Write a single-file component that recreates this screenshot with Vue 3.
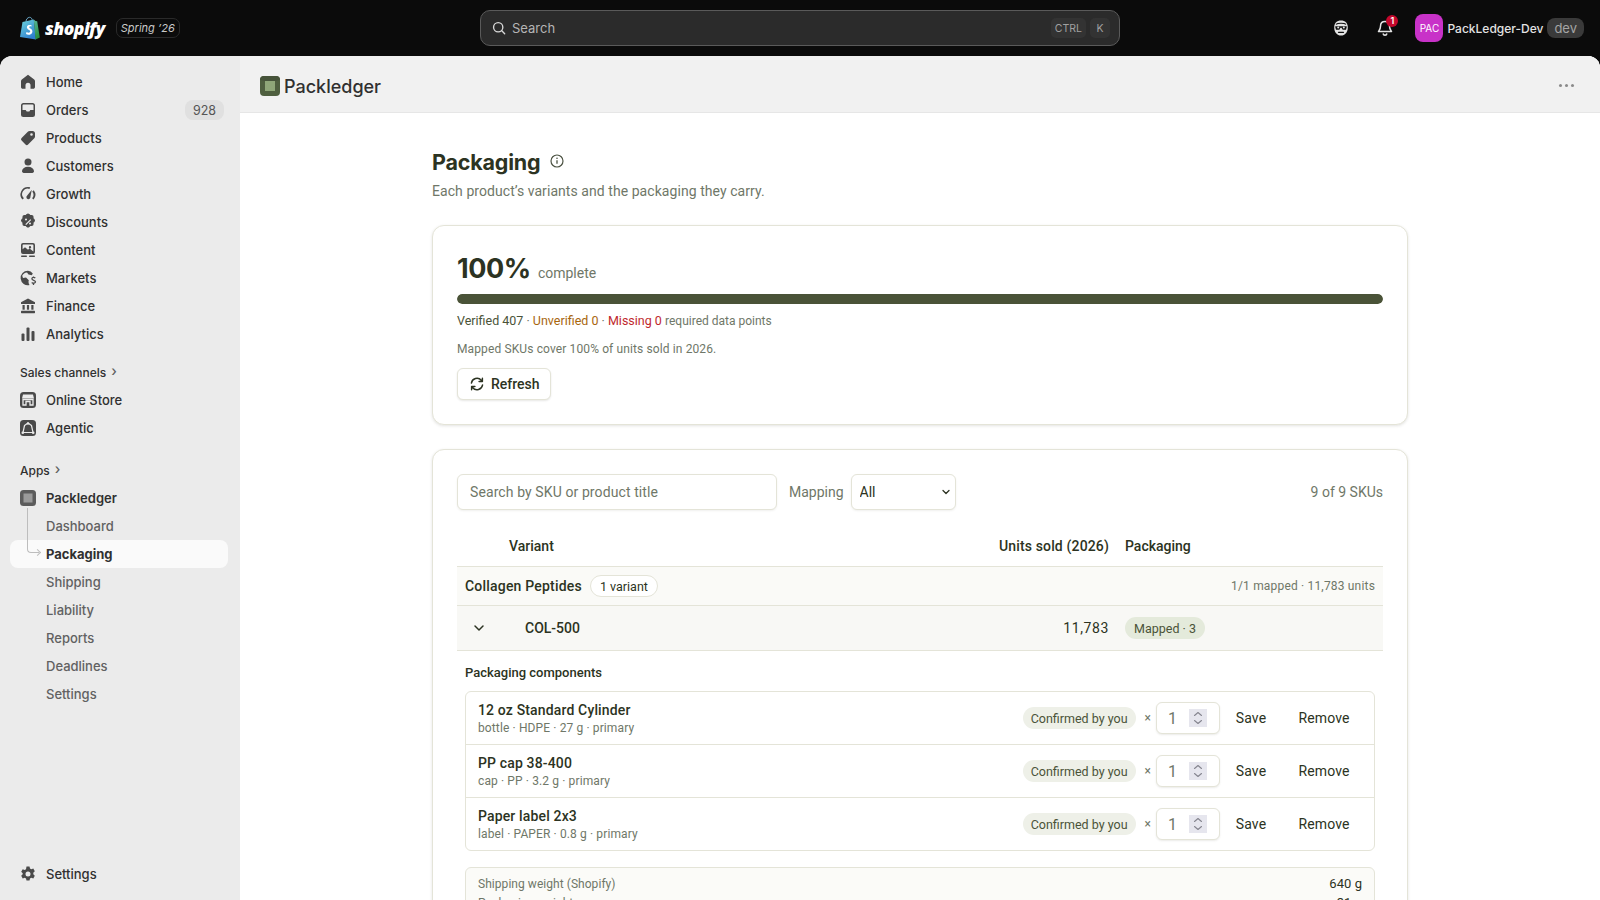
<template>
  <div class="app">
    <header class="topbar">
      <div class="brand">
        <svg class="bag" width="22" height="25" viewBox="0 0 22 24">
          <defs>
            <linearGradient id="bagLeft" x1="0" y1="0" x2="0.6" y2="1">
              <stop offset="0" stop-color="#6fd8dc" />
              <stop offset="1" stop-color="#2f7fd0" />
            </linearGradient>
            <linearGradient id="bagRight" x1="0" y1="0" x2="0.3" y2="1">
              <stop offset="0" stop-color="#58b8a0" />
              <stop offset="1" stop-color="#2a8f3f" />
            </linearGradient>
          </defs>
          <path d="M7 5c0-2 1.500-4 3.500-4.200 1.800 0 2.600 1.500 2.800 3.200" fill="none" stroke="#6aa7c8" stroke-width="1" />
          <path d="M3.500 5.500 14.800 3 17 23 1 20.500z" fill="url(#bagLeft)" />
          <path d="M14.800 3 16.500 4.500 18.200 4.800 20.800 21 16.500 23z" fill="url(#bagRight)" />
          <path d="M12.500 8.800c-1-.5-4.400-1-4.600 1.700-.2 2.700 3.500 2.800 3.300 4.600-.1 1.400-2.200 1.300-3.700.4l-.5 2.100c1.800 1.100 6 1.100 6.400-2.400.3-2.900-3.300-3.200-3.200-4.700.1-.9 1.400-.9 2.400-.4z" fill="#fff" />
        </svg>
        <span class="wordmark">shopify</span>
        <span class="edition">Spring ’26</span>
      </div>
      <div class="topsearch">
        <svg width="16" height="16" viewBox="0 0 20 20"><circle cx="9" cy="9" r="5.800" fill="none" stroke="#d8d8d8" stroke-width="1.700" /><path d="m13.500 13.500 3.600 3.600" stroke="#d8d8d8" stroke-width="1.700" stroke-linecap="round" /></svg>
        <span class="topsearch-label">Search</span>
        <span class="key">CTRL</span>
        <span class="key">K</span>
      </div>
      <div class="topright">
        <svg class="top-icon" width="20" height="20" viewBox="0 0 20 20">
          <path d="M10 2.500c4.200 0 6.800 2.500 6.800 6.900 0 4.800-2.900 8.100-6.800 8.100s-6.800-3.300-6.800-8.100C3.200 5 5.800 2.500 10 2.500z" fill="#e3e3e3" />
          <path d="M5 6.300c1.500-1.500 8.500-1.500 10 0" fill="none" stroke="#111" stroke-width="1.100" />
          <path d="M4.300 8.200h11.400v1l-.7 2.500h-3.300l-1.200-1.900h-1l-1.200 1.900H5l-.7-2.500z" fill="#111" />
          <circle cx="7.200" cy="9.600" r="1" fill="#e3e3e3" />
          <circle cx="12.800" cy="9.600" r="1" fill="#e3e3e3" />
          <path d="M7.500 14.300h5" stroke="#111" stroke-width="1.200" stroke-linecap="round" />
        </svg>
        <span class="bell">
          <svg width="20" height="20" viewBox="0 0 20 20"><path d="M10 3.500c-2.800 0-4.500 2-4.500 4.700 0 3-1.300 4.200-2 5.300h13c-.7-1.100-2-2.300-2-5.300 0-2.700-1.700-4.700-4.500-4.700zM8 15.500c.3 1.200 1 1.700 2 1.700s1.700-.5 2-1.700" fill="none" stroke="#e3e3e3" stroke-width="1.500" stroke-linejoin="round" /></svg>
          <span class="bell-count">1</span>
        </span>
        <span class="avatar">PAC</span>
        <span class="store-name">PackLedger-Dev</span>
        <span class="dev-pill">dev</span>
      </div>
    </header>

    <div class="shell">
      <aside class="sidebar">
        <nav class="nav-group">
          <a v-for="item in mainNav" :key="item.label" class="nav-item">
            <svg class="nav-icon" width="20" height="20" viewBox="0 0 20 20" v-html="item.icon"></svg>
            <span class="nav-label">{{ item.label }}</span>
            <span v-if="item.count" class="nav-count">{{ item.count }}</span>
          </a>
        </nav>

        <div class="nav-heading first">Sales channels <span class="chev">›</span></div>
        <nav class="nav-group">
          <a v-for="item in channels" :key="item.label" class="nav-item">
            <svg class="nav-icon" width="20" height="20" viewBox="0 0 20 20" v-html="item.icon"></svg>
            <span class="nav-label">{{ item.label }}</span>
          </a>
        </nav>

        <div class="nav-heading">Apps <span class="chev">›</span></div>
        <nav class="nav-group app-nav">
          <a class="nav-item strong">
            <svg class="nav-icon" width="20" height="20" viewBox="0 0 20 20">
              <rect x="2" y="2" width="16" height="16" rx="3.500" fill="#5c5c5c" />
              <rect x="5.500" y="5.500" width="9" height="9" fill="#9a9a9a" />
            </svg>
            <span class="nav-label">Packledger</span>
          </a>
          <span class="tree-line"></span>
          <a v-for="sub in appNav" :key="sub" class="nav-item sub" :class="{ active: sub === 'Packaging' }">
            <span class="nav-label">{{ sub }}</span>
          </a>
        </nav>

        <a class="nav-item settings">
          <svg class="nav-icon" width="20" height="20" viewBox="0 0 20 20" v-html="gearIcon"></svg>
          <span class="nav-label">Settings</span>
        </a>
      </aside>

      <main class="main">
        <div class="app-header">
          <svg width="20" height="20" viewBox="0 0 20 20">
            <rect width="20" height="20" rx="4" fill="#4f5f3f" />
            <path d="M0 4a4 4 0 0 1 4-4h12a4 4 0 0 1 4 4l-5 1H5z" fill="#46533a" />
            <rect x="5" y="5" width="10" height="10" fill="#8fa678" />
          </svg>
          <span class="app-title">Packledger</span>
          <span class="dots"><i></i><i></i><i></i></span>
        </div>

        <div class="page">
          <div class="page-title">
            <h1>Packaging</h1>
            <svg width="16" height="16" viewBox="0 0 16 16"><circle cx="8" cy="8" r="6" fill="none" stroke="#4b5242" stroke-width="1.200" /><path d="M8 7.300v3.400" stroke="#4b5242" stroke-width="1.300" /><circle cx="8" cy="5.200" r=".8" fill="#4b5242" /></svg>
          </div>
          <p class="subtitle">Each product’s variants and the packaging they carry.</p>

          <section class="card progress-card">
            <div class="pct-line"><span class="pct">100%</span><span class="pct-note">complete</span></div>
            <div class="bar"><div class="bar-fill" :style="{ width: percent + '%' }"></div></div>
            <p class="counts">
              <span class="ok">Verified 407</span> · <span class="warn">Unverified 0</span> · <span class="bad">Missing 0</span>&nbsp;<span class="counts-note">required data points</span>
            </p>
            <p class="coverage">Mapped SKUs cover 100% of units sold in 2026.</p>
            <button class="refresh">
              <svg width="18" height="18" viewBox="0 0 20 20" fill="none" stroke="#2c3322" stroke-width="1.600" stroke-linecap="round" stroke-linejoin="round"><path d="M3.800 9a6.300 6.300 0 0 1 11-3.200L16 7.200M16 3.500v3.700h-3.700M16.200 11a6.300 6.300 0 0 1-11 3.200L4 12.800M4 16.500v-3.700h3.700" /></svg>
              Refresh
            </button>
          </section>

          <section class="card table-card">
            <div class="filters">
              <input class="sku-search" type="text" placeholder="Search by SKU or product title" />
              <label class="mapping-label">Mapping</label>
              <span class="select-wrap">
                <select class="mapping-select"><option>All</option></select>
                <svg class="select-chev" width="10" height="10" viewBox="0 0 10 10"><path d="m2 3.500 3 3 3-3" fill="none" stroke="#2c3322" stroke-width="1.300" stroke-linecap="round" stroke-linejoin="round" /></svg>
              </span>
              <span class="sku-count">9 of 9 SKUs</span>
            </div>

            <div class="table-head">
              <span class="col-variant">Variant</span>
              <span class="col-units">Units sold (2026)</span>
              <span>Packaging</span>
            </div>

            <div class="group-row">
              <span class="group-name">Collagen Peptides</span>
              <span class="variant-pill">1 variant</span>
              <span class="group-meta">1/1 mapped · 11,783 units</span>
            </div>

            <div class="variant-row">
              <svg class="expand" width="16" height="16" viewBox="0 0 16 16"><path d="m4 6 4 4 4-4" fill="none" stroke="#2c3322" stroke-width="1.500" stroke-linecap="round" stroke-linejoin="round" /></svg>
              <span class="sku">COL-500</span>
              <span class="col-units units-val">11,783</span>
              <span><span class="mapped-pill">Mapped · 3</span></span>
            </div>

            <div class="detail">
              <h3>Packaging components</h3>
              <div class="components">
                <div v-for="c in components" :key="c.name" class="component">
                  <div class="component-text">
                    <div class="component-name">{{ c.name }}</div>
                    <div class="component-meta">{{ c.meta }}</div>
                  </div>
                  <span class="confirmed">Confirmed by you</span>
                  <span class="times">×</span>
                  <span class="qty">
                    <input class="qty-input" type="text" value="1" />
                    <span class="stepper">
                      <svg width="18" height="18" viewBox="0 0 18 18"><path d="m5.500 6.500 3.500-3 3.500 3M5.500 11.500l3.500 3 3.500-3" fill="none" stroke="#85858f" stroke-width="1.100" stroke-linecap="round" stroke-linejoin="round" /></svg>
                    </span>
                  </span>
                  <button class="link-btn save">Save</button>
                  <button class="link-btn remove">Remove</button>
                </div>
              </div>

              <div class="weights">
                <div class="weight-row"><span>Shipping weight (Shopify)</span><strong>640 g</strong></div>
                <div class="weight-row"><span>Packaging weight</span><strong>31 g</strong></div>
              </div>
            </div>
          </section>
        </div>
      </main>
    </div>
  </div>
</template>

<script setup>
const percent = 100

const mainNav = [
  { label: 'Home', icon: '<path d="M10 2.800 3.800 7.600c-.5.400-.8 1-.8 1.600v5.800c0 1 .8 1.800 1.800 1.800h2.700v-3.600a2.500 2.500 0 0 1 5 0v3.600h2.700c1 0 1.800-.8 1.800-1.800V9.200c0-.6-.3-1.200-.8-1.600z"/>' },
  { label: 'Orders', count: 928, icon: '<path fill-rule="evenodd" d="M5.500 3h9A2.500 2.500 0 0 1 17 5.500v9a2.500 2.500 0 0 1-2.500 2.500h-9A2.500 2.500 0 0 1 3 14.500v-9A2.500 2.500 0 0 1 5.500 3zm0 1.500a1 1 0 0 0-1 1V10h3.200l1 1.500h2.600l1-1.500h3.200V5.500a1 1 0 0 0-1-1z"/>' },
  { label: 'Products', icon: '<path fill-rule="evenodd" d="M11.500 3h3A2.500 2.500 0 0 1 17 5.500v3c0 .7-.3 1.300-.7 1.800l-6.200 6.200a1.800 1.800 0 0 1-2.600 0l-3.900-3.900a1.800 1.800 0 0 1 0-2.600l6.200-6.200c.5-.5 1.100-.8 1.800-.8zm2 4.800a1.300 1.300 0 1 0 0-2.600 1.300 1.300 0 0 0 0 2.600z"/>' },
  { label: 'Customers', icon: '<circle cx="10" cy="6" r="3.500"/><path d="M10 10.800c-3.300 0-5.700 1.700-6 4.300-.1 1 .7 1.900 1.700 1.900h8.600c1 0 1.800-.9 1.700-1.900-.3-2.600-2.700-4.300-6-4.300z"/>' },
  { label: 'Growth', icon: '<path d="M10 3a7.500 7.500 0 0 0-5.600 12.500l1.500-1.300A5.500 5.500 0 0 1 11.500 5l.7-1.700A7.500 7.500 0 0 0 10 3zM15.800 6.300l-1.500 1.100a5.500 5.500 0 0 1-.2 6.800l1.500 1.300a7.500 7.500 0 0 0 .2-9.200z"/><path d="M13.800 5.800 9.200 11.600a2 2 0 1 0 3.200 1.400z"/>' },
  { label: 'Discounts', icon: '<path fill-rule="evenodd" d="M8.600 2.600a2 2 0 0 1 2.800 0l.9.900 1.300-.1a2 2 0 0 1 2 2l-.1 1.300.9.900a2 2 0 0 1 0 2.800l-.9.900.1 1.300a2 2 0 0 1-2 2l-1.300-.1-.9.900a2 2 0 0 1-2.800 0l-.9-.9-1.300.1a2 2 0 0 1-2-2l.1-1.300-.9-.9a2 2 0 0 1 0-2.800l.9-.9-.1-1.300a2 2 0 0 1 2-2l1.300.1zM8 7a1 1 0 1 0 0 2 1 1 0 0 0 0-2zm4 4a1 1 0 1 0 0 2 1 1 0 0 0 0-2zm.3-3.300-5 5 .9.900 5-5z" transform="translate(0 -.5)"/>' },
  { label: 'Content', icon: '<path fill-rule="evenodd" d="M5 3h10a2 2 0 0 1 2 2v7a2 2 0 0 1-2 2H5a2 2 0 0 1-2-2V5a2 2 0 0 1 2-2zm.3 1.600a.7.7 0 0 0-.7.700v3.900l2.400-2 3 2.600 1.600-1.200 3.800 2.800V5.300a.7.7 0 0 0-.7-.7zM12 6a1.200 1.200 0 1 0 0 2.400A1.200 1.200 0 0 0 12 6z"/><rect x="3" y="15.500" width="6" height="1.500" rx=".7"/><rect x="11" y="15.500" width="6" height="1.500" rx=".7"/>' },
  { label: 'Markets', icon: '<path d="M10 2.800a7.200 7.200 0 1 0 1.500 14.200 5 5 0 0 1-1-3 5 5 0 0 1 .3-1.800L8 9.500l-3 .5-.8-2.200A5.500 5.500 0 0 1 9 4.500l1.500 2 3.300.7 1-1.800A7.200 7.200 0 0 0 10 2.800z"/><path d="M15.500 8.500v1.200m0 6v1.300m1.800-7c-1.200-1-3.400-.8-3.400.8 0 1.900 3.600 1.100 3.600 3 0 1.600-2.400 1.800-3.800.7" fill="none" stroke="currentColor" stroke-width="1.300"/>' },
  { label: 'Finance', icon: '<path d="M10 2.500 3 6.200V8h14V6.200z"/><rect x="4.500" y="9" width="2.200" height="4.700"/><rect x="8.900" y="9" width="2.200" height="4.700"/><rect x="13.300" y="9" width="2.200" height="4.700"/><rect x="3" y="14.700" width="14" height="2.500" rx=".6"/>' },
  { label: 'Analytics', icon: '<rect x="3.500" y="9.500" width="3" height="7.500" rx="1"/><rect x="8.500" y="3.500" width="3" height="13.500" rx="1"/><rect x="13.500" y="7" width="3" height="10" rx="1"/>' }
]

const channels = [
  { label: 'Online Store', icon: '<rect x="2" y="2" width="16" height="16" rx="3.500"/><path d="M5 4.500h10l1 4H4z" fill="#ebebeb"/><path d="M5 9.500h10V15h-3v-3.500H8V15H5z" fill="none" stroke="#ebebeb" stroke-width="1.300"/>' },
  { label: 'Agentic', icon: '<rect x="2" y="2" width="16" height="16" rx="3.500"/><path d="M10 5 6.500 7.500 5 14.500h10l-1.500-7z" fill="none" stroke="#ebebeb" stroke-width="1.200" stroke-linejoin="round"/><circle cx="10" cy="5.500" r="1.200" fill="#ebebeb"/><circle cx="4.800" cy="14.800" r="1.300" fill="#ebebeb"/><circle cx="15.200" cy="14.800" r="1.300" fill="#ebebeb"/>' }
]

const appNav = ['Dashboard', 'Packaging', 'Shipping', 'Liability', 'Reports', 'Deadlines', 'Settings']

const gearIcon = '<path fill-rule="evenodd" d="M8.500 2.500h3l.5 2.100 1.300.7 2-.7 1.500 2.600-1.500 1.500v1.600l1.500 1.500-1.500 2.600-2-.7-1.300.7-.5 2.100h-3l-.5-2.100-1.300-.7-2 .7-1.500-2.600 1.500-1.500V9.300L3.200 7.800l1.500-2.600 2 .7L8 5.200zM10 12.500a2.500 2.500 0 1 0 0-5 2.500 2.500 0 0 0 0 5z"/>'

const components = [
  { name: '12 oz Standard Cylinder', meta: 'bottle · HDPE · 27 g · primary' },
  { name: 'PP cap 38-400', meta: 'cap · PP · 3.2 g · primary' },
  { name: 'Paper label 2x3', meta: 'label · PAPER · 0.8 g · primary' }
]
</script>

<style>
html, body { margin: 0; height: 100%; overflow: hidden; background: #0b0b0b; }
</style>

<style scoped>
* { box-sizing: border-box; }

.app {
  height: 900px;
  display: flex;
  flex-direction: column;
  font-family: Inter, "Liberation Sans", sans-serif;
  background: #0b0b0b;
  overflow: hidden;
}

/* top bar */
.topbar {
  height: 56px;
  flex: none;
  display: grid;
  grid-template-columns: 480px 640px 1fr;
  align-items: center;
  color: #e3e3e3;
}

.brand {
  display: flex;
  align-items: center;
  padding-left: 19px;
}

.wordmark {
  margin-left: 4px;
  font-family: "Open Sans", sans-serif;
  font-style: italic;
  font-weight: 800;
  font-size: 17.5px;
  letter-spacing: -0.5px;
  color: #fff;
}

.edition {
  margin-left: 11px;
  height: 20px;
  padding: 0 4px;
  display: flex;
  align-items: center;
  border: 1px solid #2a2a2a;
  border-radius: 7px;
  font-size: 11px;
  font-style: italic;
  color: #c8c8c8;
}

.topsearch {
  height: 36px;
  display: flex;
  align-items: center;
  gap: 4px;
  padding: 0 9px 0 10px;
  background: #2b2b2b;
  border: 1px solid #5a5a5a;
  border-radius: 10px;
}

.topsearch-label {
  flex: 1;
  margin-left: 1px;
  font-size: 13px;
  color: #b5b5b5;
}

.key {
  min-width: 20px;
  height: 20px;
  padding: 0 4px;
  display: flex;
  align-items: center;
  justify-content: center;
  background: #333;
  border-radius: 5px;
  font-size: 10.500px;
  color: #a0a0a0;
}

.topright {
  display: flex;
  align-items: center;
  justify-content: flex-end;
  padding-right: 16px;
}

.top-icon { margin-right: 24px; }

.bell {
  position: relative;
  display: flex;
  margin-right: 20px;
}

.bell-count {
  position: absolute;
  top: -3px;
  right: -3px;
  width: 12px;
  height: 12px;
  border-radius: 50%;
  background: #c4072c;
  color: #fff;
  font-size: 9px;
  font-weight: 600;
  line-height: 12px;
  text-align: center;
}

.avatar {
  width: 28px;
  height: 28px;
  margin-right: 4px;
  display: flex;
  align-items: center;
  justify-content: center;
  background: #c832c8;
  border-radius: 8px;
  font-size: 10px;
  font-weight: 400;
  color: #fff;
}

.store-name {
  font-size: 12px;
  font-weight: 450;
  color: #e3e3e3;
}

.dev-pill {
  margin-left: 4px;
  height: 20px;
  padding: 0 7px;
  display: flex;
  align-items: center;
  background: #3a3a3a;
  border-radius: 8px;
  font-size: 13px;
  color: #a5a5a5;
}

/* sidebar */
.shell {
  flex: 1;
  min-height: 0;
  display: flex;
  border-radius: 12px 12px 0 0;
  overflow: hidden;
  background: #fff;
}

.sidebar {
  width: 240px;
  flex: none;
  display: flex;
  flex-direction: column;
  padding: 12px 12px 12px 10px;
  background: #ebebeb;
  color: #303030;
}

.nav-group {
  display: flex;
  flex-direction: column;
}

.nav-item {
  position: relative;
  height: 28px;
  display: flex;
  align-items: center;
  padding: 0 4px 0 8px;
  font-size: 13px;
  font-weight: 500;
  color: #303030;
  border-radius: 8px;
}

.nav-icon {
  flex: none;
  fill: #4a4a4a;
  color: #4a4a4a;
  margin-right: 8px;
}

.nav-label { flex: 1; }

.nav-count {
  min-width: 39px;
  height: 20px;
  display: flex;
  align-items: center;
  justify-content: center;
  background: #e0e0e0;
  border-radius: 8px;
  font-size: 12.500px;
  font-weight: 400;
  color: #555;
}

.nav-heading {
  margin: 14px 0 0 10px;
  height: 28px;
  display: flex;
  align-items: center;
  gap: 5px;
  font-size: 12px;
  font-weight: 500;
  color: #303030;
}

.nav-heading.first { margin-top: 10px; }

.chev {
  font-size: 14px;
  line-height: 1;
  margin-top: -2px;
  color: #616161;
}

.app-nav { position: relative; }

.tree-line {
  position: absolute;
  left: 17px;
  top: 24px;
  z-index: 1;
  width: 12px;
  height: 45px;
  border-left: 1.500px solid #bdbdbd;
  border-bottom: 1.500px solid #bdbdbd;
  border-bottom-left-radius: 4px;
}

.tree-line::after {
  content: "";
  position: absolute;
  right: -1px;
  bottom: -3px;
  width: 4px;
  height: 4px;
  border-top: 1.500px solid #bdbdbd;
  border-right: 1.500px solid #bdbdbd;
  transform: rotate(45deg);
}

.nav-item.strong { font-weight: 600; }

.nav-item.sub {
  padding-left: 36px;
  font-weight: 450;
  color: #616161;
}

.nav-item.sub.active {
  background: #fafafa;
  color: #303030;
  font-weight: 650;
}

.nav-item.settings { margin-top: auto; }

/* main column */
.main {
  flex: 1;
  min-width: 0;
  overflow: hidden;
  background: #fff;
}

.app-header {
  height: 57px;
  display: flex;
  align-items: center;
  gap: 4px;
  padding: 4px 20px 0;
  background: #f1f1f1;
  border-bottom: 1px solid #e6e6e6;
}

.app-title {
  flex: 1;
  font-size: 18px;
  font-weight: 500;
  color: #303030;
}

.dots {
  display: flex;
  gap: 3px;
  margin: -2px 6px 0 0;
}

.dots i {
  width: 3px;
  height: 3px;
  border-radius: 50%;
  background: #8a8a8a;
}

.page {
  width: 976px;
  margin: 0 auto;
  padding-top: 33px;
  font-family: Roboto, "Noto Sans", sans-serif;
  color: #2c3322;
}

.page-title {
  display: flex;
  align-items: center;
  gap: 9px;
}

.page-title h1 {
  margin: 0;
  font-family: Inter, sans-serif;
  font-size: 21.500px;
  line-height: 32px;
  font-weight: 700;
  letter-spacing: -0.2px;
  color: #2c3322;
}

.page-title svg { margin-top: -2px; }

.subtitle {
  margin: 3px 0 23px;
  font-size: 14px;
  line-height: 21px;
  letter-spacing: 0.06px;
  color: #6f7768;
}

.card {
  background: #fff;
  border: 1px solid #e4e4d8;
  border-radius: 12px;
  box-shadow: 0 1px 3px rgba(60, 60, 40, 0.14);
  padding: 24px;
}

.progress-card {
  height: 200px;
  margin-bottom: 24px;
}

.pct-line {
  display: flex;
  align-items: baseline;
  gap: 7px;
  height: 36px;
  padding-top: 1px;
}

.pct {
  font-family: Inter, sans-serif;
  font-size: 27px;
  font-weight: 750;
  letter-spacing: -0.4px;
  line-height: 36px;
}

.pct-note {
  font-size: 14px;
  color: #6f7768;
}

.bar {
  height: 10px;
  margin-top: 8px;
  border-radius: 5px;
  background: #e4e4d8;
  overflow: hidden;
}

.bar-fill {
  height: 100%;
  background: #4a5338;
  border-radius: 5px;
}

.counts {
  margin: 8px 0 0;
  font-size: 12.500px;
  line-height: 18px;
  color: #6f7768;
}

.ok { color: #4a5338; font-weight: 400; }
.warn { color: #a8660e; font-weight: 400; }
.bad { color: #c0282d; font-weight: 400; }

.counts-note { font-size: 12px; }

.coverage {
  margin: 10px 0 0;
  font-size: 12px;
  line-height: 18px;
  letter-spacing: 0.12px;
  color: #6f7768;
}

.refresh {
  margin-top: 10px;
  height: 32px;
  display: flex;
  align-items: center;
  gap: 5px;
  padding: 0 10px;
  background: #fff;
  border: 1px solid #e4e4d8;
  border-radius: 6px;
  box-shadow: 0 1px 2px rgba(60, 60, 40, 0.12);
  font-family: inherit;
  font-size: 14px;
  font-weight: 500;
  color: #2c3322;
}

.filters {
  display: flex;
  align-items: center;
  height: 36px;
}

.sku-search {
  width: 320px;
  height: 36px;
  padding: 0 12px;
  border: 1px solid #e4e4d8;
  border-radius: 6px;
  box-shadow: 0 1px 2px rgba(60, 60, 40, 0.08);
  font-family: inherit;
  font-size: 14px;
  letter-spacing: 0.1px;
  outline: none;
}

.sku-search::placeholder { color: #6f7768; }

.mapping-label {
  margin: 0 7px 0 12px;
  font-size: 14px;
  color: #6f7768;
}

.select-wrap {
  position: relative;
  display: flex;
}

.mapping-select {
  width: 105px;
  height: 36px;
  padding: 0 8px;
  appearance: none;
  background: #fff;
  border: 1px solid #e4e4d8;
  border-radius: 6px;
  box-shadow: 0 1px 2px rgba(60, 60, 40, 0.08);
  font-family: inherit;
  font-size: 14px;
  color: #2c3322;
}

.select-chev {
  position: absolute;
  right: 5px;
  top: 13px;
  pointer-events: none;
}

.sku-count {
  margin-left: auto;
  font-size: 14px;
  color: #6f7768;
}

.table-head {
  margin-top: 16px;
  height: 41px;
  display: grid;
  grid-template-columns: 1fr 180px 258px;
  align-items: center;
  border-bottom: 1px solid #e4e4d8;
  font-size: 14px;
  font-weight: 500;
}

.col-variant { padding-left: 52px; }
.col-units { text-align: right; padding-right: 16px; letter-spacing: 0.15px; }

.group-row {
  height: 39px;
  display: flex;
  align-items: center;
  gap: 8px;
  padding: 0 8px;
  background: #fafaf7;
  border-bottom: 1px solid #e4e4d8;
}

.group-name {
  font-size: 14px;
  font-weight: 500;
  letter-spacing: 0.2px;
}

.variant-pill {
  height: 22px;
  padding: 0 9px;
  display: flex;
  align-items: center;
  border: 1px solid #e4e4d8;
  border-radius: 11px;
  background: #fff;
  font-size: 12.500px;
  font-weight: 400;
}

.group-meta {
  margin-left: auto;
  font-size: 12px;
  letter-spacing: 0.18px;
  color: #6f7768;
}

.variant-row {
  height: 45px;
  display: grid;
  grid-template-columns: 68px 1fr 180px 258px;
  align-items: center;
  background: #f8f8f5;
  border-bottom: 1px solid #e4e4d8;
  font-size: 14px;
}

.expand { margin-left: 14px; }

.sku { font-weight: 500; }

.units-val { letter-spacing: 0.6px; }

.mapped-pill {
  display: inline-flex;
  align-items: center;
  height: 22px;
  padding: 0 9px;
  border-radius: 11px;
  background: #e4eadb;
  font-size: 12.500px;
  font-weight: 400;
  color: #4a5338;
}

.detail { padding: 13px 8px 0; }

.detail h3 {
  margin: 0 0 9px;
  font-size: 13px;
  line-height: 18px;
  font-weight: 500;
}

.components {
  border: 1px solid #e4e4d8;
  border-radius: 6px;
}

.component {
  height: 53px;
  display: flex;
  align-items: center;
  padding: 0 12px;
  border-bottom: 1px solid #e4e4d8;
}

.component:last-child {
  height: 52px;
  border-bottom: none;
}

.component-text { flex: 1; }

.component-name {
  font-size: 14px;
  line-height: 18px;
  font-weight: 500;
  letter-spacing: 0.15px;
}

.component-meta {
  margin-top: 1px;
  font-size: 12px;
  line-height: 16px;
  letter-spacing: 0.12px;
  color: #6f7768;
}

.confirmed {
  height: 22px;
  padding: 0 8px;
  display: flex;
  align-items: center;
  border-radius: 11px;
  background: #eef0e8;
  font-size: 12.500px;
  font-weight: 400;
  color: #4a5338;
}

.times {
  margin: 0 5px 0 9px;
  font-size: 12px;
  color: #6f7768;
}

.qty {
  width: 64px;
  height: 32px;
  display: flex;
  align-items: center;
  padding: 0 12px 0 11px;
  background: #fff;
  border: 1px solid #e4e4d8;
  border-radius: 6px;
  box-shadow: 0 1px 2px rgba(60, 60, 40, 0.1);
}

.qty-input {
  width: 0;
  flex: 1;
  padding: 0;
  border: none;
  outline: none;
  font-family: inherit;
  font-size: 16px;
  color: #6f7768;
}

.stepper {
  width: 18px;
  height: 18px;
  flex: none;
  display: flex;
  background: #e6e6ee;
}

.link-btn {
  height: 32px;
  padding: 0;
  background: none;
  border: none;
  font-family: inherit;
  font-size: 14px;
  font-weight: 400;
  letter-spacing: 0.1px;
  color: #2c3322;
}

.save { margin-left: 15px; width: 32px; }
.remove { margin: 0 12px 0 31px; width: 52px; }

.weights {
  margin-top: 16px;
  padding: 7px 12px;
  display: flex;
  flex-direction: column;
  gap: 1px;
  background: #fbfbf8;
  border: 1px solid #e4e4d8;
  border-radius: 6px;
}

.weight-row {
  display: flex;
  justify-content: space-between;
  line-height: 18px;
  font-size: 12px;
  letter-spacing: 0.05px;
  color: #6f7768;
}

.weight-row strong {
  font-size: 13px;
  font-weight: 400;
  color: #2c3322;
}
</style>
